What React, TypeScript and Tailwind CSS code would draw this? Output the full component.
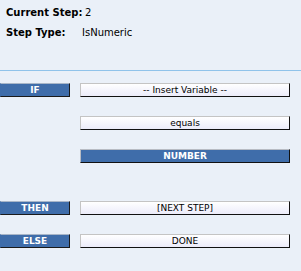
import React from "react"

// one condition row: dark blue tag on the left, value button on the right
function Row({ tag, value, active }: { tag?: string, value: string, active?: boolean }) {
    return (
        <div className="flex flex-row items-start h-[14px]">
            {tag ?
                <div className="w-[70px] h-[14px] bg-[#3f6daa] border-t border-l border-t-[#a9b6c8] border-l-[#3f6daa] border-r border-b border-r-[#1a1a1a] border-b-[#1a1a1a] text-white font-bold text-[9px] leading-[12px] text-center">
                    {tag}
                </div>
            :
                <div className="w-[70px]" />
            }
            {active ?
                <div className="ml-[10px] w-[210px] h-[14px] bg-[#3f6daa] border-t border-l border-[#b8bcc4] border-r border-b border-r-[#111] border-b-[#111] text-white font-bold text-[9px] leading-[12px] text-center">
                    {value}
                </div>
            :
                <div className="ml-[10px] w-[210px] h-[14px] bg-gradient-to-b from-white to-[#ececfa] border-t border-l border-[#c4c4c4] border-r border-b border-r-[#111] border-b-[#111] text-black text-[9px] leading-[12px] text-center">
                    {value}
                </div>
            }
        </div>
    )
}

export default function App() {
    return (
        <div className="w-[301px] h-[271px] bg-[#eaf0f8] overflow-hidden" style={{ fontFamily: '"DejaVu Sans", Verdana, sans-serif' }}>
            <div className="pl-[6px] pt-[5px] text-black">
                <div className="flex flex-row h-[14px] items-center whitespace-nowrap">
                    <span className="font-bold text-[10px] w-[79px] shrink-0">Current Step:</span>
                    <span className="text-[10px]">2</span>
                </div>
                <div className="flex flex-row h-[14px] items-center mt-[6px] whitespace-nowrap">
                    <span className="font-bold text-[10px] w-[76px] shrink-0">Step Type:</span>
                    <span className="text-[10px]">IsNumeric</span>
                </div>
            </div>
            <div className="mt-[31px] border-t border-[#90c3ea]" />
            <div className="mt-[12px] flex flex-col">
                <Row tag="IF" value="-- Insert Variable --" />
                <div className="h-[19px]" />
                <Row value="equals" />
                <div className="h-[19px]" />
                <Row value="NUMBER" active />
                <div className="h-[38px]" />
                <Row tag="THEN" value="[NEXT STEP]" />
                <div className="h-[19px]" />
                <Row tag="ELSE" value="DONE" />
            </div>
        </div>
    )
}
